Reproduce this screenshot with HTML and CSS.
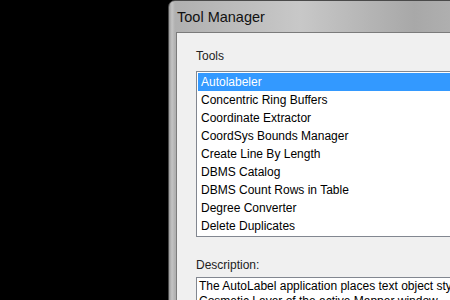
FILE: index.html
```html
<!DOCTYPE html>
<html lang="en">
<head>
    <meta charset="UTF-8" />
    <title>Tool Manager</title>
    <link rel="stylesheet" href="styles.css">
</head>
<body>
    <div class="window">
        <div class="titlebar">Tool Manager</div>
        <div class="client">
            <div class="label">Tools</div>
            <ul class="list">
                <li class="selected">Autolabeler</li>
                <li>Concentric Ring Buffers</li>
                <li>Coordinate Extractor</li>
                <li>CoordSys Bounds Manager</li>
                <li>Create Line By Length</li>
                <li>DBMS Catalog</li>
                <li>DBMS Count Rows in Table</li>
                <li>Degree Converter</li>
                <li>Delete Duplicates</li>
            </ul>
            <div class="label desc-label">Description:</div>
            <div class="desc">The AutoLabel application places text object styles in the<br>Cosmetic Layer of the active Mapper window.</div>
        </div>
    </div>
</body>
</html>
```

FILE: styles.css
```css
html, body {
    margin: 0;
    height: 100%;
    overflow: hidden;
}

body {
    background: #000;
    font-family: "Liberation Sans", Arial, sans-serif;
}

.window {
    margin-left: 168px;
    width: 320px;
    height: 320px;
    padding-left: 7px;
    border: 1px solid #4a4a4a;
    border-radius: 7px 0 0 0;
    background: linear-gradient(90deg, #9c9c9c 0px, #c4c4c4 3px, #b0b0b0 6px, #c8c8c8 40%, #a8a8a8 75%, #b8b8b8 100%);
}

.titlebar {
    height: 31px;
    display: flex;
    align-items: center;
    padding-left: 1px;
    font-size: 14.5px;
    color: #111;
}

.client {
    height: 100%;
    background: #f0f0f0;
    border-top: 1px solid #7b7b7b;
    border-left: 1px solid #7b7b7b;
    padding: 15px 0 0 19px;
}

.label {
    font-size: 12px;
    line-height: 16px;
    color: #222;
    margin-bottom: 7px;
}

.list {
    list-style: none;
    margin: 0;
    padding: 1px;
    background: #fff;
    border: 1px solid #828790;
    border-right: none;
}

.list li {
    height: 18px;
    line-height: 18px;
    padding-left: 3px;
    font-size: 12px;
    color: #000;
    white-space: nowrap;
}

.list li.selected {
    background: #3399ff;
    color: #fff;
}

.desc-label {
    margin-top: 20px;
    margin-bottom: 4px;
}

.desc {
    background: #fff;
    border: 1px solid #828790;
    border-right: none;
    padding: 1px 2px;
    font-size: 12px;
    line-height: 15px;
    white-space: nowrap;
    overflow: hidden;
}
```
